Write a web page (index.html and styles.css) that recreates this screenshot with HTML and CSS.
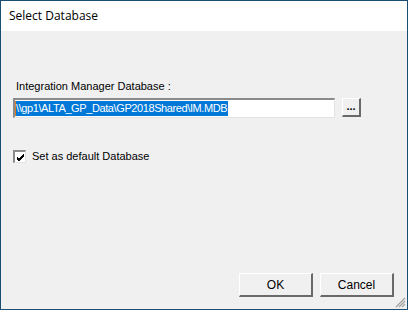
FILE: index.html
```html
<!DOCTYPE html>
<html lang="en">
<head>
  <meta charset="UTF-8">
  <link rel="stylesheet" href="styles.css">
  <title>Select Database</title>
</head>
<body>
  <div class="window">
    <div class="titlebar">Select Database</div>

    <div class="content">
      <div class="label">Integration Manager Database :</div>

      <div class="path-row">
        <div class="textbox">
          <span class="caret"></span><span class="selected">\\gp1\ALTA_GP_Data\GP2018Shared\IM.MDB</span>
        </div>
        <div class="btn browse">...</div>
      </div>

      <div class="check-row">
        <span class="checkbox">
          <svg width="9" height="9" viewBox="0 0 9 9">
            <path d="M1 4 L3 6 L8 1 M1 5 L3 7 L8 2 M1 6 L3 8 L8 3" stroke="#000" stroke-width="1" fill="none"/>
          </svg>
        </span>
        <span>Set as default Database</span>
      </div>

      <div class="spacer"></div>

      <div class="actions">
        <div class="btn action">OK</div>
        <div class="btn action">Cancel</div>
      </div>
    </div>

    <svg class="grip" width="11" height="11" viewBox="0 0 11 11">
      <path d="M10 1 L1 10 M10 4 L4 10 M10 7 L7 10" stroke="#a0a0a0" stroke-width="1.2"/>
    </svg>
  </div>
</body>
</html>
```

FILE: styles.css
```css
body {
  margin: 0;
  font-family: "Liberation Sans", Arial, sans-serif;
  font-size: 11px;
  color: #000;
}

.window {
  position: relative;
  width: 408px;
  height: 310px;
  box-sizing: border-box;
  border: 1px solid #1b4f72;
  display: flex;
  flex-direction: column;
  background: #f0f0f0;
}

.titlebar {
  height: 30px;
  line-height: 30px;
  padding-left: 8px;
  background: #fff;
  font-family: "Open Sans", "Noto Sans", sans-serif;
  font-size: 12px;
  color: #000;
}

.content {
  flex: 1;
  display: flex;
  flex-direction: column;
  padding: 0 13px 12px 12px;
}

.label {
  margin-top: 49px;
  margin-left: 3px;
  line-height: 13px;
}

.path-row {
  display: flex;
  align-items: flex-start;
  margin-top: 5px;
}

.textbox {
  width: 322px;
  height: 20px;
  box-sizing: border-box;
  background: #fff;
  border-top: 2px solid #8a8a8a;
  border-left: 2px solid #8a8a8a;
  border-right: 1px solid #e3e3e3;
  border-bottom: 1px solid #e3e3e3;
  display: flex;
  align-items: center;
  white-space: nowrap;
}

.caret {
  width: 1px;
  height: 15px;
  background: #e07a20;
}

.selected {
  background: #0078d7;
  color: #fff;
  line-height: 15px;
  letter-spacing: -0.4px;
  padding-right: 1px;
}

.btn {
  box-sizing: border-box;
  background: #f0f0f0;
  border-top: 1px solid #fff;
  border-left: 1px solid #fff;
  border-right: 2px solid #696969;
  border-bottom: 2px solid #696969;
  display: flex;
  align-items: center;
  justify-content: center;
}

.browse {
  width: 19px;
  height: 19px;
  margin-left: 7px;
  font-weight: bold;
  font-size: 11px;
  line-height: 1;
  padding-bottom: 2px;
}

.check-row {
  display: flex;
  align-items: center;
  margin-top: 32px;
  gap: 6px;
  line-height: 13px;
}

.checkbox {
  width: 13px;
  height: 13px;
  box-sizing: border-box;
  background: #fff;
  border-top: 2px solid #8a8a8a;
  border-left: 2px solid #8a8a8a;
  border-right: 1px solid #e3e3e3;
  border-bottom: 1px solid #e3e3e3;
  display: flex;
  align-items: center;
  justify-content: center;
}

.spacer {
  flex: 1;
}

.actions {
  display: flex;
  justify-content: flex-end;
  gap: 7px;
}

.action {
  width: 74px;
  height: 24px;
  font-size: 12px;
}

.grip {
  position: absolute;
  right: 1px;
  bottom: 1px;
}
```
